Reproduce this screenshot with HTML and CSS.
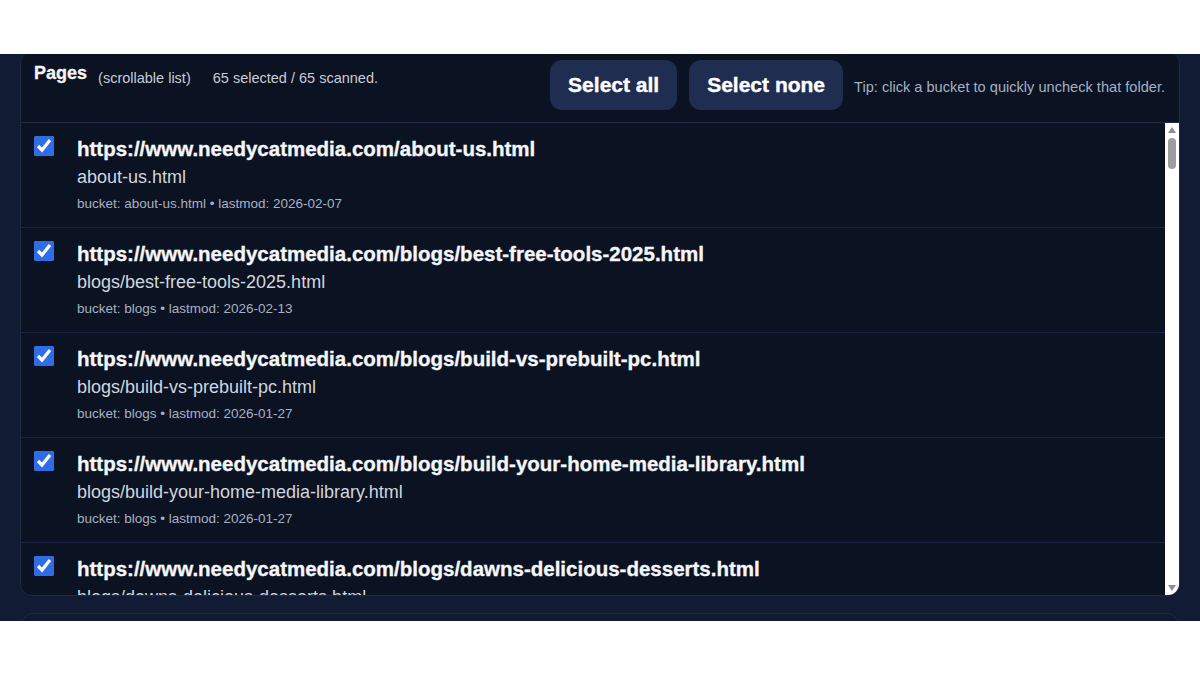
FILE: index.html
```html
<!DOCTYPE html>
<html lang="en">

<head>
  <meta charset="UTF-8">
  <meta name="viewport" content="width=device-width, initial-scale=1">
  <title>Sitemap Pages</title>

  <link rel="stylesheet" href="styles.css">
</head>
<body>

  <div class="frame">
    <section class="panel">
      <div class="panel-head">
        <div class="head-left">
          <h3>Pages</h3>
          <span class="hint">(scrollable list)</span>
          <span class="count" id="count">65 selected / 65 scanned.</span>
        </div>
        <div class="head-right">
          <button class="btn" onclick="setAll(true)">Select all</button>
          <button class="btn" onclick="setAll(false)">Select none</button>
          <span class="tip">Tip: click a bucket to quickly uncheck that folder.</span>
        </div>
      </div>

      <div class="list-wrap">
        <div class="page-list" id="pageList"></div>

        <!-- light scrollbar drawn over the list -->
        <div class="scrollbar">
          <div class="sb-btn"><span class="arrow up"></span></div>
          <div class="sb-track" id="track"><div class="sb-thumb" id="thumb"></div></div>
          <div class="sb-btn"><span class="arrow down"></span></div>
        </div>
      </div>
    </section>

    <section class="panel next"></section>
  </div>

  <script>
    const site = "https://www.needycatmedia.com/";

    const pages = [
      ["about-us.html", "2026-02-07"],
      ["blogs/best-free-tools-2025.html", "2026-02-13"],
      ["blogs/build-vs-prebuilt-pc.html", "2026-01-27"],
      ["blogs/build-your-home-media-library.html", "2026-01-27"],
      ["blogs/dawns-delicious-desserts.html", "2026-01-27"],
      ["blogs/diy-cat-tree-ideas.html", "2026-01-22"],
      ["blogs/easy-weeknight-dinners.html", "2026-01-19"],
      ["blogs/getting-started-with-plex.html", "2026-01-15"],
      ["blogs/home-network-basics.html", "2026-01-12"],
      ["blogs/how-to-choose-a-nas.html", "2026-01-09"],
      ["blogs/indoor-cat-enrichment.html", "2026-01-05"],
      ["blogs/jellyfin-vs-plex.html", "2025-12-30"],
      ["blogs/keeping-your-pc-cool.html", "2025-12-22"],
      ["blogs/meal-prep-on-a-budget.html", "2025-12-18"],
      ["blogs/mechanical-keyboard-guide.html", "2025-12-11"],
      ["blogs/media-server-setup.html", "2025-12-04"],
      ["blogs/monitor-buying-guide.html", "2025-11-28"],
      ["blogs/password-managers-explained.html", "2025-11-20"],
      ["blogs/raspberry-pi-projects.html", "2025-11-14"],
      ["blogs/retro-gaming-on-a-budget.html", "2025-11-06"],
      ["blogs/self-hosting-for-beginners.html", "2025-10-30"],
      ["blogs/smart-home-starter-kit.html", "2025-10-24"],
      ["blogs/sourdough-for-beginners.html", "2025-10-17"],
      ["blogs/ssd-vs-hdd.html", "2025-10-09"],
      ["blogs/streaming-setup-guide.html", "2025-10-02"],
      ["blogs/upgrading-your-gpu.html", "2025-09-25"],
      ["blogs/wifi-dead-zones.html", "2025-09-18"],
      ["blogs/windows-tweaks.html", "2025-09-11"],
      ["contact.html", "2026-02-07"],
      ["gallery/cats.html", "2026-01-30"],
      ["gallery/desserts.html", "2026-01-30"],
      ["gallery/index.html", "2026-01-30"],
      ["gallery/pc-builds.html", "2026-01-30"],
      ["index.html", "2026-02-13"],
      ["privacy-policy.html", "2025-12-01"],
      ["projects/cat-feeder.html", "2026-01-20"],
      ["projects/home-lab.html", "2026-01-20"],
      ["projects/index.html", "2026-01-20"],
      ["projects/media-center.html", "2026-01-20"],
      ["projects/pi-hole.html", "2026-01-20"],
      ["recipes/apple-crumble.html", "2026-01-10"],
      ["recipes/banana-bread.html", "2026-01-10"],
      ["recipes/chocolate-mousse.html", "2026-01-10"],
      ["recipes/index.html", "2026-01-10"],
      ["recipes/lemon-bars.html", "2026-01-10"],
      ["recipes/pumpkin-pie.html", "2026-01-10"],
      ["reviews/budget-headphones.html", "2025-12-15"],
      ["reviews/gaming-mice.html", "2025-12-15"],
      ["reviews/index.html", "2025-12-15"],
      ["reviews/nas-drives.html", "2025-12-15"],
      ["reviews/streaming-sticks.html", "2025-12-15"],
      ["reviews/webcams.html", "2025-12-15"],
      ["services/index.html", "2026-02-01"],
      ["services/pc-repair.html", "2026-02-01"],
      ["services/web-design.html", "2026-02-01"],
      ["sitemap.html", "2026-02-13"],
      ["terms.html", "2025-12-01"],
      ["tools/bandwidth-calculator.html", "2026-01-25"],
      ["tools/index.html", "2026-01-25"],
      ["tools/password-generator.html", "2026-01-25"],
      ["tools/qr-code-maker.html", "2026-01-25"],
      ["tools/unit-converter.html", "2026-01-25"],
      ["videos/cat-compilations.html", "2026-02-05"],
      ["videos/index.html", "2026-02-05"],
      ["videos/pc-build-timelapse.html", "2026-02-05"]
    ];

    const list = document.getElementById("pageList");
    const track = document.getElementById("track");
    const thumb = document.getElementById("thumb");

    // One row per scanned page, bucket = first folder (or the file itself)
    pages.forEach(([path, lastmod]) => {
      const bucket = path.includes("/") ? path.split("/")[0] : path;
      const row = document.createElement("label");
      row.className = "row";
      row.innerHTML = `
        <input type="checkbox" checked>
        <div class="row-text">
          <div class="url">${site}${path}</div>
          <div class="path">${path}</div>
          <div class="meta">bucket: ${bucket} • lastmod: ${lastmod}</div>
        </div>`;
      list.appendChild(row);
    });

    function updateCount() {
      const boxes = list.querySelectorAll("input");
      const checked = list.querySelectorAll("input:checked").length;
      document.getElementById("count").textContent = `${checked} selected / ${boxes.length} scanned.`;
    }

    function setAll(value) {
      list.querySelectorAll("input").forEach(box => box.checked = value);
      updateCount();
    }

    // keep the drawn thumb in sync with the list
    function updateThumb() {
      const trackH = track.clientHeight;
      const size = Math.max(20, trackH * list.clientHeight / list.scrollHeight);
      const maxScroll = list.scrollHeight - list.clientHeight;
      const top = maxScroll > 0 ? (trackH - size - 2) * list.scrollTop / maxScroll : 0;
      thumb.style.height = size + "px";
      thumb.style.top = (top + 1) + "px";
    }

    list.addEventListener("change", updateCount);
    list.addEventListener("scroll", updateThumb);
    updateCount();
    updateThumb();
  </script>

</body>
</html>
```

FILE: styles.css
```css
body {
  margin: 0;
  background: #fff;
  font-family: "Liberation Sans", Arial, sans-serif;
}

.frame {
  margin-top: 54px;
  height: 567px;
  overflow: hidden;
  background: #121b34;
  padding: 0 20px;
  box-sizing: border-box;
}

.panel {
  margin-top: -3px;
  background: #0b1221;
  border: 1px solid #1f2a44;
  border-radius: 12px;
  overflow: hidden;
}

.panel.next {
  margin-top: 17px;
  height: 40px;
  background: #101930;
  border-color: #1d2845;
  border-radius: 14px;
}

/* header */
.panel-head {
  display: flex;
  justify-content: space-between;
  align-items: flex-start;
  padding: 8px 14px 12px 13px;
}

.head-left {
  display: flex;
  align-items: flex-start;
}

.head-left h3 {
  margin: 3px 0 0;
  font-size: 18px;
  color: #f3f5f9;
  -webkit-text-stroke: 0.3px currentColor;
}

.hint,
.count {
  margin-top: 10px;
  font-size: 14.5px;
  color: #c6ccd8;
}

.hint {
  margin-left: 11px;
}

.count {
  margin-left: 22px;
}

.head-right {
  display: flex;
  align-items: baseline;
}

.btn {
  height: 50px;
  padding: 0 18px;
  margin-right: 12px;
  font-family: inherit;
  font-size: 21px;
  font-weight: bold;
  color: #fff;
  background: #1f2d50;
  border: none;
  border-radius: 12px;
  cursor: pointer;
  -webkit-text-stroke: 0.4px currentColor;
}

.btn:hover {
  background: #283a65;
}

.tip {
  margin-left: -1px;
  font-size: 14.6px;
  color: #a6b0c4;
}

/* list */
.list-wrap {
  position: relative;
  border-top: 1px solid #1f2a44;
}

.page-list {
  height: 472px;
  overflow-y: scroll;
  scrollbar-width: none;
}

.row {
  display: flex;
  gap: 23px;
  padding: 13px 14px 15px 13px;
  border-bottom: 1px solid #1b2540;
  cursor: pointer;
}

.row input {
  width: 20px;
  height: 20px;
  margin: 0;
  flex-shrink: 0;
  accent-color: #2e6de6;
}

.row-text {
  display: flex;
  flex-direction: column;
}

.url {
  padding-top: 1px;
  margin-bottom: 7px;
  font-size: 20.5px;
  line-height: 23px;
  font-weight: bold;
  color: #f4f6fa;
  -webkit-text-stroke: 0.35px currentColor;
}

.path {
  margin-bottom: 8px;
  font-size: 18px;
  line-height: 21px;
  color: #d0d6df;
}

.meta {
  font-size: 13.5px;
  line-height: 16px;
  color: #a7b1c4;
}

/* drawn scrollbar */
.scrollbar {
  position: absolute;
  top: 0;
  right: 0;
  bottom: 0;
  width: 14px;
  background: #fff;
  display: flex;
  flex-direction: column;
}

.sb-btn {
  height: 14px;
  display: flex;
  align-items: center;
  justify-content: center;
}

.arrow {
  width: 0;
  height: 0;
  border-left: 4.5px solid transparent;
  border-right: 4.5px solid transparent;
}

.arrow.up {
  border-bottom: 6px solid #8e8e8e;
}

.arrow.down {
  border-top: 6px solid #8e8e8e;
}

.sb-track {
  flex: 1;
  position: relative;
}

.sb-thumb {
  position: absolute;
  left: 3px;
  right: 3px;
  border-radius: 4px;
  background: #9d9d9d;
}
```
